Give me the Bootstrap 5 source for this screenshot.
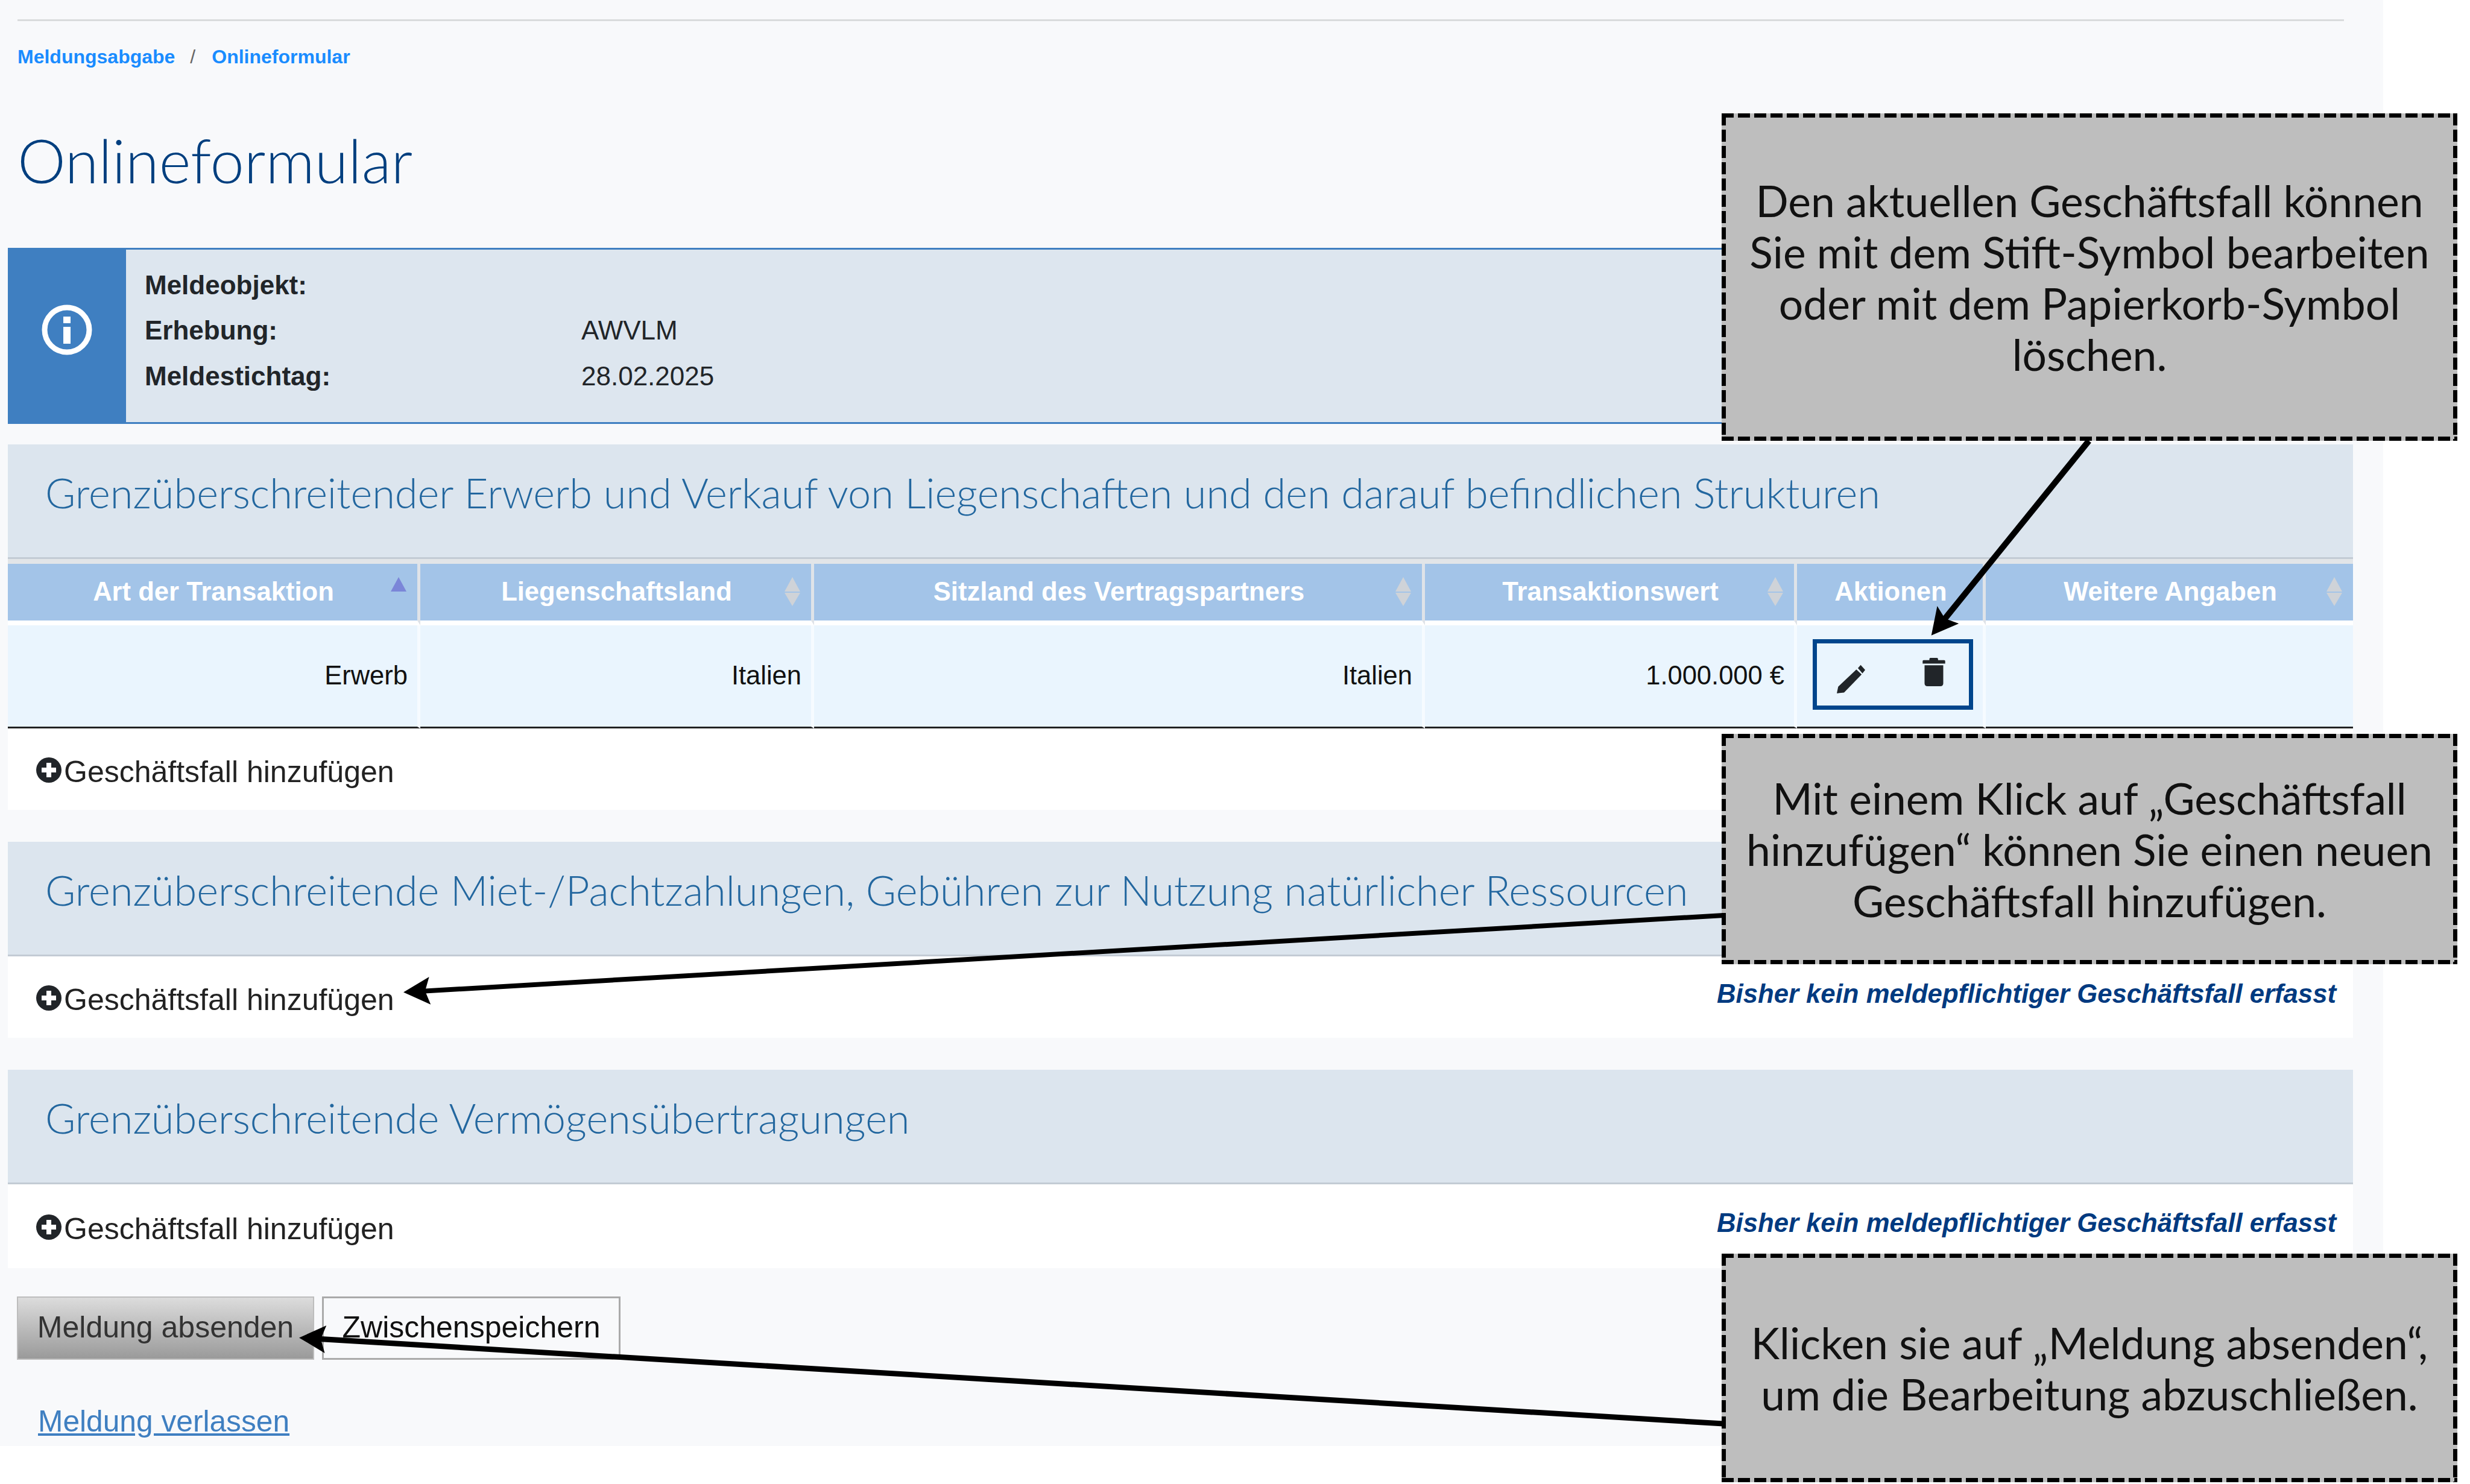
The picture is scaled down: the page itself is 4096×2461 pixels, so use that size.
<!doctype html>
<html lang="de">
<head>
<meta charset="utf-8">
<title>Onlineformular</title>
<link href="https://cdn.jsdelivr.net/npm/bootstrap@5.3.0/dist/css/bootstrap.min.css" rel="stylesheet">
<style>
html,body{margin:0;background:#fff;}
body{font-family:"Liberation Sans",Arial,sans-serif;color:#212529;width:4096px;height:2461px;overflow:hidden;position:relative;}
.frame{width:3952px;height:2398px;background:#f8f9fb;padding:32px 0 0 13px;}
.toprule{height:3px;width:3858px;margin:0 0 0 16px;background:#d9dbdc;}
.crumbs{margin:39px 0 0 16px;height:40px;line-height:40px;font-size:32px;font-weight:700;}
.crumbs a{color:#1a8cff;text-decoration:none;}
.crumbs span{color:#666;font-weight:400;margin:0 27px 0 25px;}
.pagetitle{margin:91px 0 0 16px;height:120px;line-height:120px;font-family:Lato,sans-serif;font-weight:300;font-size:101px;color:#003f7f;}
.infobox{margin-top:86px;width:3889px;height:292px;background:#dde6ef;border-top:3px solid #3f7fc1;border-bottom:3px solid #3f7fc1;}
.infoicon{width:196px;background:#3f7fc1;padding-bottom:20px;}
.infotext{padding:0 0 18px 31px;}
.inforow{height:75.5px;line-height:75.5px;font-size:44px;}
.infolabel{width:724px;font-weight:700;}
.sechead{width:3889px;height:190px;background:#dce5ee;border-bottom:3px solid #c3cbd4;padding:0 0 26px 62px;font-family:Lato,sans-serif;font-weight:300;font-size:68.5px;color:#23679f;}
.first{margin-top:34px;}
.later{margin-top:53px;}
.strip{width:3889px;height:8px;background:#e2e5e8;}
.gridtable{width:3889px;table-layout:fixed;border-collapse:separate;border-spacing:0;margin:0;}
.gridtable th:nth-child(1){width:684px;}
.gridtable th:nth-child(2){width:653px;}
.gridtable th:nth-child(3){width:1013px;}
.gridtable th:nth-child(4){width:617px;}
.gridtable th:nth-child(5){width:313px;}
.gridtable th{position:relative;height:102px;background:#a3c4e8;border-right:5px solid #dfe3e8;border-bottom:8px solid #fff;color:#fff;text-align:center;font-size:43.6px;font-weight:700;padding:0 0 0 3px;vertical-align:middle;}
.gridtable td{height:171px;background:#eaf5fe;border-right:5px solid #f6fbff;border-bottom:3px solid #222;text-align:right;font-size:43.5px;color:#111;padding:0 16px 0 0;vertical-align:middle;}
.gridtable th:last-child,.gridtable td:last-child{border-right:0;}
.tri{position:absolute;right:18px;width:0;height:0;border-left:13px solid transparent;border-right:13px solid transparent;}
.tup{top:22px;border-bottom:24px solid #cfd3d8;}
.tdown{top:48px;border-top:22px solid #cfd3d8;}
.tactive{border-bottom-color:#7b86d8;}
.actbox{width:266px;height:117px;margin:-5px 0 0 26px;border:7px solid #00458c;padding:0 39px 0 33px;}
.addrow{width:3889px;height:135px;background:#fff;padding:0 28px 0 47px;}
.tallrow{height:139px;}
.addlink{font-size:50px;color:#222;padding-top:9px;}
.addicon{margin-top:-6px;}
.nonote{font-size:43.7px;font-weight:700;font-style:italic;color:#003a80;margin-bottom:12px;}
.btnrow{margin:47px 0 0 15px;}
.sendbtn,.savebtn{height:105px;border-radius:0;font-size:50px;line-height:1;padding:0 0 3px;display:flex;align-items:center;justify-content:center;}
.sendbtn{width:493px;background:linear-gradient(#dcdcdc,#9a9a9a);border:2px solid #bdbdbd;color:#333;}
.savebtn{width:495px;margin-left:13px;background:#f8f9fb;border:3px solid #aaa;color:#111;}
.leavelink{display:block;margin:74px 0 0 50px;height:56px;line-height:56px;font-size:49.7px;color:#3f7fc1;}
.arrows{position:absolute;left:0;top:0;pointer-events:none;}
.callout{position:absolute;left:2855px;width:1220px;font-family:Lato,sans-serif;font-size:71.4px;line-height:85px;color:#111;text-align:center;
background:
 repeating-linear-gradient(90deg,#000 0 20px,transparent 20px 27px) top/100% 7px no-repeat,
 repeating-linear-gradient(90deg,#000 0 20px,transparent 20px 27px) bottom/100% 7px no-repeat,
 repeating-linear-gradient(180deg,#000 0 20px,transparent 20px 27px) left/7px 100% no-repeat,
 repeating-linear-gradient(180deg,#000 0 20px,transparent 20px 27px) right/7px 100% no-repeat,
 #bebebe;}
.c1{top:188px;height:543px;}
.c2{top:1217px;height:382px;}
.c3{top:2079px;height:379px;}
</style>
</head>
<body>
<div class="frame">
  <div class="toprule"></div>
  <nav class="crumbs"><a href="#">Meldungsabgabe</a><span>/</span><a href="#">Onlineformular</a></nav>
  <h1 class="pagetitle mb-0">Onlineformular</h1>

  <div class="infobox d-flex">
    <div class="infoicon d-flex align-items-center justify-content-center">
      <svg width="86" height="86" viewBox="0 0 86 86"><circle cx="43" cy="43" r="37" fill="none" stroke="#fff" stroke-width="9"/><rect x="37" y="21" width="12" height="11" fill="#fff"/><rect x="37" y="38" width="12" height="28" fill="#fff"/></svg>
    </div>
    <div class="infotext d-flex flex-column justify-content-center">
      <div class="d-flex inforow"><div class="infolabel">Meldeobjekt:</div><div></div></div>
      <div class="d-flex inforow"><div class="infolabel">Erhebung:</div><div>AWVLM</div></div>
      <div class="d-flex inforow"><div class="infolabel">Meldestichtag:</div><div>28.02.2025</div></div>
    </div>
  </div>

  <div class="sechead first d-flex align-items-center">Grenzüberschreitender Erwerb und Verkauf von Liegenschaften und den darauf befindlichen Strukturen</div>
  <div class="strip"></div>
  <table class="gridtable">
    <thead>
      <tr>
        <th>Art der Transaktion<span class="tri tup tactive"></span></th>
        <th>Liegenschaftsland<span class="tri tup"></span><span class="tri tdown"></span></th>
        <th>Sitzland des Vertragspartners<span class="tri tup"></span><span class="tri tdown"></span></th>
        <th>Transaktionswert<span class="tri tup"></span><span class="tri tdown"></span></th>
        <th>Aktionen</th>
        <th>Weitere Angaben<span class="tri tup"></span><span class="tri tdown"></span></th>
      </tr>
    </thead>
    <tbody>
      <tr>
        <td>Erwerb</td>
        <td>Italien</td>
        <td>Italien</td>
        <td>1.000.000 €</td>
        <td class="p-0">
          <div class="actbox d-flex align-items-center justify-content-between">
            <svg width="47" height="49" viewBox="0 0 145 150" class="mt-3"><path fill="#212529" d="M0 147 7 113 100 25 127 50 37 143ZM108 18 122 2 145 27 131 45Z"/></svg>
            <svg width="38" height="47" viewBox="0 0 117 147" class="mb-2"><path fill="#212529" d="M35 12V6Q35 0 41 0H74Q80 0 80 6V12H112Q117 12 117 17V30H0V17Q0 12 5 12ZM10 38H107V132Q107 147 92 147H25Q10 147 10 132Z"/></svg>
          </div>
        </td>
        <td></td>
      </tr>
    </tbody>
  </table>
  <div class="addrow d-flex align-items-center justify-content-between">
    <a class="addlink d-flex align-items-center text-decoration-none" href="#"><svg width="42" height="42" viewBox="0 0 42 42" class="me-1 addicon"><circle cx="21" cy="21" r="21" fill="#212529"/><path fill="#fff" d="M17 9h8v8h8v8h-8v8h-8v-8H9v-8h8z"/></svg>Geschäftsfall hinzufügen</a>
  </div>

  <div class="sechead later d-flex align-items-center">Grenzüberschreitende Miet-/Pachtzahlungen, Gebühren zur Nutzung natürlicher Ressourcen</div>
  <div class="addrow d-flex align-items-center justify-content-between">
    <a class="addlink d-flex align-items-center text-decoration-none" href="#"><svg width="42" height="42" viewBox="0 0 42 42" class="me-1 addicon"><circle cx="21" cy="21" r="21" fill="#212529"/><path fill="#fff" d="M17 9h8v8h8v8h-8v8h-8v-8H9v-8h8z"/></svg>Geschäftsfall hinzufügen</a>
    <div class="nonote">Bisher kein meldepflichtiger Geschäftsfall erfasst</div>
  </div>

  <div class="sechead later d-flex align-items-center">Grenzüberschreitende Vermögensübertragungen</div>
  <div class="addrow tallrow d-flex align-items-center justify-content-between">
    <a class="addlink d-flex align-items-center text-decoration-none" href="#"><svg width="42" height="42" viewBox="0 0 42 42" class="me-1 addicon"><circle cx="21" cy="21" r="21" fill="#212529"/><path fill="#fff" d="M17 9h8v8h8v8h-8v8h-8v-8H9v-8h8z"/></svg>Geschäftsfall hinzufügen</a>
    <div class="nonote">Bisher kein meldepflichtiger Geschäftsfall erfasst</div>
  </div>

  <div class="btnrow d-flex">
    <button type="button" class="btn sendbtn">Meldung absenden</button>
    <button type="button" class="btn savebtn">Zwischenspeichern</button>
  </div>
  <a class="leavelink" href="#">Meldung verlassen</a>
</div>

<svg class="arrows" width="4096" height="2461" viewBox="0 0 4096 2461">
  <defs>
    <marker id="head" markerUnits="userSpaceOnUse" markerWidth="44" markerHeight="46" refX="34" refY="23" orient="auto">
      <path d="M0 0 44 23 0 46 8 23Z" fill="#000"/>
    </marker>
  </defs>
  <line x1="3464" y1="731" x2="3209" y2="1046" stroke="#000" stroke-width="10" marker-end="url(#head)"/>
  <line x1="2858" y1="1518" x2="679" y2="1645" stroke="#000" stroke-width="8" marker-end="url(#head)"/>
  <line x1="2858" y1="2361" x2="506" y2="2219" stroke="#000" stroke-width="9" marker-end="url(#head)"/>
</svg>

<div class="callout c1 d-flex align-items-center justify-content-center">Den aktuellen Geschäftsfall können<br>Sie mit dem Stift-Symbol bearbeiten<br>oder mit dem Papierkorb-Symbol<br>löschen.</div>
<div class="callout c2 d-flex align-items-center justify-content-center">Mit einem Klick auf „Geschäftsfall<br>hinzufügen“ können Sie einen neuen<br>Geschäftsfall hinzufügen.</div>
<div class="callout c3 d-flex align-items-center justify-content-center">Klicken sie auf „Meldung absenden“,<br>um die Bearbeitung abzuschließen.</div>

<script src="https://cdn.jsdelivr.net/npm/bootstrap@5.3.0/dist/js/bootstrap.bundle.min.js"></script>
</body>
</html>
